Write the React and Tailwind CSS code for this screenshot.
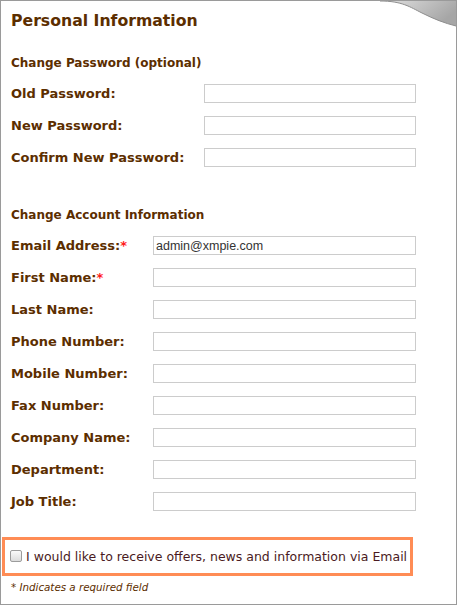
import React from 'react'

const passwordFields = ['Old Password:', 'New Password:', 'Confirm New Password:']

const accountFields = [
  { label: 'Email Address:', required: true, value: 'admin@xmpie.com' },
  { label: 'First Name:', required: true },
  { label: 'Last Name:' },
  { label: 'Phone Number:' },
  { label: 'Mobile Number:' },
  { label: 'Fax Number:' },
  { label: 'Company Name:' },
  { label: 'Department:' },
  { label: 'Job Title:' },
]

function Field({ label, required, value, inputLeft }) {
  return (
    <div className="flex items-center h-[19px]">
      <label className={`${inputLeft} shrink-0 text-[13px] font-bold text-[#5c2e00] leading-none`}>
        {label}
        {required && <span className="text-[#ff1a1a]">*</span>}
      </label>
      <input
        readOnly
        defaultValue={value}
        className="h-[19px] flex-1 border border-[#cccccc] bg-white px-[2px] text-[12.5px] text-[#333] outline-none"
        style={{ fontFamily: '"Liberation Sans", Arial, sans-serif' }}
      />
    </div>
  )
}

export default function App() {
  return (
    <div
      className="relative w-[457px] h-[605px] overflow-hidden border border-[#9a9a9a] bg-white"
      style={{ fontFamily: '"DejaVu Sans", Verdana, sans-serif' }}
    >
      {/* Page curl */}
      <svg className="absolute top-0 right-0" width="76" height="28" viewBox="0 0 76 28">
        <defs>
          <linearGradient id="curl" x1="0" y1="0" x2="1" y2="0.4">
            <stop offset="0" stopColor="#e2e2e2" />
            <stop offset="1" stopColor="#a6a6a6" />
          </linearGradient>
        </defs>
        <path d="M0 0 C22 0 30 6 42 12 C54 18 64 22 76 25 L76 0 Z" fill="url(#curl)" />
        <path d="M0 0 C22 0 30 6 42 12 C54 18 64 22 76 25" fill="none" stroke="#8e8e8e" strokeWidth="1" />
      </svg>

      <div className="pl-[10px] pr-[40px]">
        <h1 className="pt-[8px] text-[15.7px] leading-[24px] font-bold text-[#5c2e00]">Personal Information</h1>

        <h2 className="mt-[21px] text-[12px] leading-[18px] font-bold text-[#5c2e00]">Change Password (optional)</h2>
        <div className="mt-[12px] flex flex-col gap-[13px]">
          {passwordFields.map((l) => (
            <Field key={l} label={l} inputLeft="w-[193px]" />
          ))}
        </div>

        <h2 className="mt-[39px] text-[12px] leading-[18px] font-bold text-[#5c2e00]">Change Account Information</h2>
        <div className="mt-[12px] flex flex-col gap-[13px]">
          {accountFields.map((f) => (
            <Field key={f.label} {...f} inputLeft="w-[142px]" />
          ))}
        </div>
      </div>

      <div className="mt-[26px] ml-[1px] w-[411px] h-[39px] border-[3px] border-[#ff8c55] flex items-center pl-[5px] pt-[2px]">
        <span className="w-[12px] h-[12px] -mt-[3px] rounded-[2px] border border-[#9c9c9c] bg-gradient-to-b from-[#fafafa] to-[#dcdcdc] shrink-0" />
        <span className="ml-[4px] text-[12.5px] text-[#4a1a22] whitespace-nowrap">
          I would like to receive offers, news and information via Email
        </span>
      </div>

      <p className="mt-[4px] pl-[10px] text-[10.3px] italic text-[#5c2e00]">* Indicates a required field</p>
    </div>
  )
}
